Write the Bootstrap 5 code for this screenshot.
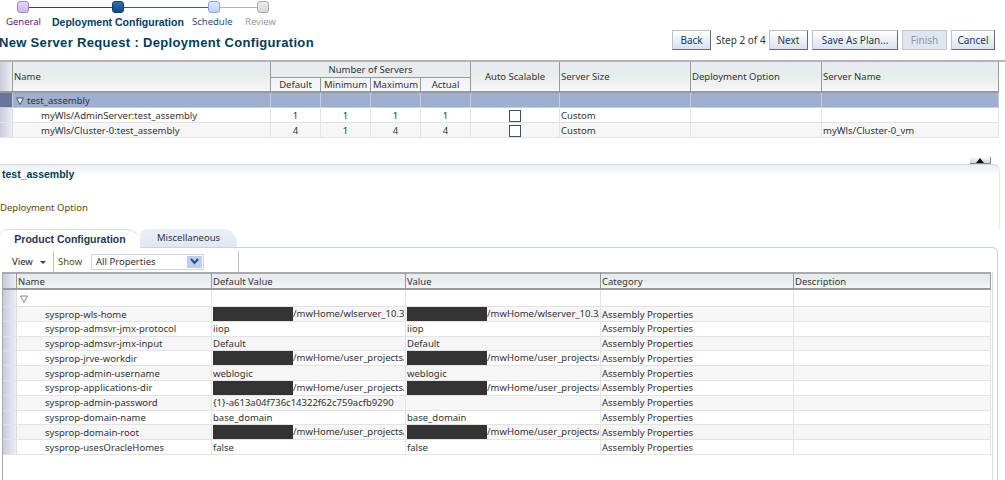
<!DOCTYPE html>
<html lang="en"><head><meta charset="utf-8"><title>New Server Request</title>
<link href="https://cdn.jsdelivr.net/npm/bootstrap@5.3.0/dist/css/bootstrap.min.css" rel="stylesheet">
<style>
html,body{height:480px;overflow:hidden;background:#fff}
body{font-family:"Noto Sans",sans-serif;font-size:9.5px;color:#333;line-height:14px}
.wiz-track{height:13px;margin-left:17px;padding-top:1px}
.wiz-node{width:12px;height:12px;border-radius:3px;border:1px solid #999;flex:none}
.wn-done{background:linear-gradient(#e6d6fb,#cdb4f2);border-color:#9b8ab5}
.wn-cur{background:linear-gradient(#2f73ad,#0d4a80);border-color:#0e3f6c}
.wn-next{background:linear-gradient(#e2ecff,#bcd0f7);border-color:#8aa5d4}
.wn-off{background:linear-gradient(#eee,#d5d5d5);border-color:#aaa}
.wiz-line{height:1px}
.wl-a{width:83px;background:#6d1f7c}.wl-b{width:84px;background:#2a5fa8}.wl-c{width:37px;background:#a9b3c6}
.wiz-labels{height:15px;padding-left:6px;margin-top:2px;white-space:nowrap}
.wl1{color:#6a0d78;width:46px}.wl2{color:#003d6b;font-family:"Liberation Sans",sans-serif;font-size:10.5px;font-weight:700;width:140px}.wl3{color:#1d4e8c;width:53px}.wl4{color:#8f9cab}
.page-head{height:31px;padding-right:10px}
.page-title{font-family:"Liberation Sans",sans-serif;font-size:13px;font-weight:700;color:#003d5b;margin:-2px 0 0 -1px;line-height:18px;letter-spacing:.32px}
.trainbtn{--bs-btn-padding-x:0;--bs-btn-padding-y:0;--bs-btn-border-radius:0;height:20px;line-height:18px;background:linear-gradient(#fff,#d8e2f0);border:1px solid #b9c3d0;border-right-color:#667;border-bottom-color:#667;color:#1c3a5c;font-size:10px}
.trainbtn:disabled{background:#dfe6ef;color:#8a96a4;opacity:1;border-color:#c0c8d2}
.step-txt{width:49px;margin:0 4px 0 5px;white-space:nowrap;font-size:10px}
.w39{width:39px}.w86{width:86px}.w45{width:45px}.w44{width:44px}
.btn-row{gap:4px}
.top-wrap{height:78px;border-top:2px solid #b5b5b5;margin-top:-1px}
.table.ag{table-layout:fixed;border-collapse:separate;border-spacing:0;margin:0;--bs-table-bg:transparent;color:#333}
.table.ag>:not(caption)>*>*{padding:0 1px;border:0;border-right:1px solid #e4e4e4;border-bottom:1px solid #e4e4e4;white-space:nowrap;overflow:hidden;font-weight:400;vertical-align:middle;background-color:#fff;box-shadow:none;line-height:13px}
.table.ag>thead>tr>th{background:linear-gradient(#e8eaf2,#e6eeea 45%,#f5f6fa);border-right:1px solid #999;border-bottom:2px solid #999}
.table.ag>thead>tr>th.mid{text-align:center;border-bottom:1px solid #999;background:linear-gradient(#e8eaf2,#e6eeea)}
.table.ag>thead>tr>th.sub{text-align:center;background:linear-gradient(#f0f2f7,#f7f8fb)}
.table.ag>:not(caption)>tr>.gut{background:linear-gradient(90deg,#c8cbdc,#eceef4);padding:0}
.table.ag>tbody>tr>td.gut{border-right:1px solid #ddd}
.table.ag>tbody>tr.alt>td:not(.gut){background:#f6f6f6}
.table.ag>tbody>tr.picked>td{background:#9fafcf;border-right-color:#c5cfe2;border-bottom-color:#c5cfe2}
.table.ag>tbody>tr.picked>td.gut{background:#67769a}
.t1 thead tr{height:15.5px}
.t1 tbody tr{height:15px}
.table.ag>tbody>tr>td.ctr,.table.ag>thead>tr>th.ctr{text-align:center}
.twist{display:inline-block;vertical-align:-1px;margin-right:3px;margin-left:2px}
.table.ag>tbody>tr>td.ind{padding-left:28px}
.chk.form-check-input{width:12px;height:12px;margin:0;border:1px solid #3d4f6e;border-radius:0;vertical-align:middle;float:none;display:inline-block}
.det-bar{height:13px;margin-top:13px;padding-right:14px}
.split-knob{width:21px;height:7px;background:linear-gradient(#fff,#cdd2dc);border:0;border-right:1px solid #888;border-bottom:1px solid #888;border-radius:0;padding:0}
.det-head{height:65px;border-top:1px solid #cfd6e4;border-right:1px solid #e6eaf0;border-top-right-radius:6px;margin-right:5px;background:linear-gradient(#e9f0f6 0,#fff 11px);padding:1px 0 0 2px}
.det-title{font-family:"Liberation Sans",sans-serif;font-weight:700;color:#003d5b;font-size:10.5px;margin:0;line-height:16px}
.olive{color:#5c4a00}
.dep-opt{margin:18px 0 0 -2px;height:16px;line-height:16px;white-space:nowrap}
.tabstrip{height:18px;--bs-nav-tabs-border-width:0;position:relative;z-index:1}
.tabstrip .nav-link{padding:0;height:18px;line-height:18px;border:0;border-radius:7px 14px 0 0;color:#333;text-align:center}
.tabstrip .tab-a{width:140px;height:19px;font-family:"Liberation Sans",sans-serif;font-size:10.5px;color:#2a3550;font-weight:700;background:#fff;border-top:1px solid #d5dceb}
.tabstrip .tab-b{width:97px;background:linear-gradient(#eaf0f8,#dfe8f3)}
.panel-x{height:233px;border-top:1px solid #c8d3e4;border-right:1px solid #c8d3e4;border-top-right-radius:6px;margin-right:7px;padding:3px 4px 0 2px}
.bar-x{height:21px}
.v-sep{width:1px;height:21px;background:#b8c3d2}
.view-b{width:51px;padding-left:10px;line-height:21px;color:#222}
.caret-x{display:inline-block;border:3px solid transparent;border-top:3px solid #444;border-bottom:0;margin-left:7px;vertical-align:1px}
.show-l{width:33px;margin-left:4px}
.sel-x{width:113px;height:16px;border:1px solid #cfd5de;padding-left:4px;line-height:14px;margin-right:34px}
.sel-arrow{width:15px;height:12px;background:#bccff0;margin:1px}
.t2-wrap{border-left:1px solid #aaa;border-right:1px solid #ddd;height:210px}
.t2 thead tr{height:18px}
.table.ag.t2 thead th{border-top:2px solid #aaa;padding-top:1px}
.t2 tbody tr{height:14.67px}
.t2 tbody tr.lead-row{height:17px}
.table.ag>tbody>tr>td.ind2{padding-left:28px}
.redact{display:inline-block;background:#333;height:15px;flex:none;width:80px}
.rcell>div{display:flex;height:14px;overflow:hidden;align-items:flex-start}
</style></head>
<body>
<div class="d-flex align-items-center wiz-track">
 <div class="wiz-node wn-done"></div><div class="wiz-line wl-a"></div>
 <div class="wiz-node wn-cur"></div><div class="wiz-line wl-b"></div>
 <div class="wiz-node wn-next"></div><div class="wiz-line wl-c"></div>
 <div class="wiz-node wn-off"></div>
</div>
<div class="d-flex wiz-labels">
 <div class="wl1">General</div><div class="wl2">Deployment Configuration</div><div class="wl3">Schedule</div><div class="wl4">Review</div>
</div>
<div class="d-flex justify-content-between align-items-start page-head">
 <h1 class="page-title mt-1">New Server Request : Deployment Configuration</h1>
 <div class="d-flex align-items-center">
  <button class="btn trainbtn w39" type="button">Back</button>
  <span class="step-txt">Step 2 of 4</span>
  <div class="d-flex btn-row">
  <button class="btn trainbtn w39" type="button">Next</button>
  <button class="btn trainbtn w86" type="button">Save As Plan...</button>
  <button class="btn trainbtn w45" type="button" disabled>Finish</button>
  <button class="btn trainbtn w44" type="button">Cancel</button>
  </div>
 </div>
</div>
<div class="top-wrap">
<table class="table ag t1" style="width:999px">
<colgroup><col style="width:13px"><col style="width:258px"><col style="width:50px"><col style="width:50px"><col style="width:50px"><col style="width:50px"><col style="width:89px"><col style="width:131px"><col style="width:131px"><col style="width:177px"></colgroup>
<thead>
<tr><th class="gut" rowspan="2"></th><th rowspan="2">Name</th><th colspan="4" class="mid">Number of Servers</th><th rowspan="2" class="ctr">Auto Scalable</th><th rowspan="2">Server Size</th><th rowspan="2">Deployment Option</th><th rowspan="2">Server Name</th></tr>
<tr><th class="sub">Default</th><th class="sub">Minimum</th><th class="sub">Maximum</th><th class="sub">Actual</th></tr>
</thead>
<tbody>
<tr class="picked"><td class="gut"></td><td><svg class="twist" width="8" height="8" viewBox="0 0 8 8"><path d="M.5 1h7L4 7.5z" fill="#e8ecf4" stroke="#556"/></svg>test_assembly</td><td></td><td></td><td></td><td></td><td></td><td></td><td></td><td></td></tr>
<tr><td class="gut"></td><td class="ind">myWls/AdminServer:test_assembly</td><td class="ctr">1</td><td class="ctr">1</td><td class="ctr">1</td><td class="ctr">1</td><td class="ctr"><input class="form-check-input chk" type="checkbox" aria-label="Auto scalable"></td><td>Custom</td><td></td><td></td></tr>
<tr class="alt"><td class="gut"></td><td class="ind">myWls/Cluster-0:test_assembly</td><td class="ctr">4</td><td class="ctr">1</td><td class="ctr">4</td><td class="ctr">4</td><td class="ctr"><input class="form-check-input chk" type="checkbox" aria-label="Auto scalable"></td><td>Custom</td><td></td><td>myWls/Cluster-0_vm</td></tr>
</tbody></table>
</div>
<div class="d-flex justify-content-end align-items-end det-bar">
 <button class="btn split-knob d-flex align-items-center justify-content-center" type="button" aria-label="Collapse"><svg width="8" height="5" viewBox="0 0 8 5"><path d="M4 0l4 5H0z" fill="#111"/></svg></button>
</div>
<div class="det-head">
 <h2 class="det-title">test_assembly</h2>
 <div class="dep-opt olive">Deployment Option</div>
</div>
<ul class="nav nav-tabs tabstrip">
 <li class="nav-item"><a class="nav-link tab-a" href="#">Product Configuration</a></li>
 <li class="nav-item"><a class="nav-link tab-b" href="#">Miscellaneous</a></li>
</ul>
<div class="panel-x">
 <div class="d-flex align-items-center bar-x">
  <div class="view-b">View<span class="caret-x"></span></div><div class="v-sep"></div>
  <span class="olive show-l">Show</span>
  <div class="d-flex justify-content-between align-items-start sel-x"><span>All Properties</span><span class="sel-arrow d-flex align-items-center justify-content-center"><svg width="9" height="7" viewBox="0 0 9 7"><path d="M1 1l3.5 4L8 1" fill="none" stroke="#2d4a80" stroke-width="2"/></svg></span></div>
  <div class="v-sep"></div>
 </div>
 <div class="t2-wrap">
 <table class="table ag t2" style="width:988px">
 <colgroup><col style="width:14px"><col style="width:195px"><col style="width:194px"><col style="width:195px"><col style="width:193px"><col style="width:197px"></colgroup>
 <thead><tr><th class="gut"></th><th>Name</th><th>Default Value</th><th>Value</th><th>Category</th><th>Description</th></tr></thead>
 <tbody>
 <tr class="lead-row"><td class="gut"></td><td><svg class="twist" width="8" height="8" viewBox="0 0 8 8"><path d="M.5 1h7L4 7.5z" fill="#fff" stroke="#888"/></svg></td><td></td><td></td><td></td><td></td></tr>
 <tr class="alt"><td class="gut"></td><td class="ind2">sysprop-wls-home</td><td class="rcell"><div><span class="redact"></span>/mwHome/wlserver_10.3/</div></td><td class="rcell"><div><span class="redact"></span>/mwHome/wlserver_10.3/</div></td><td>Assembly Properties</td><td></td></tr>
 <tr><td class="gut"></td><td class="ind2">sysprop-admsvr-jmx-protocol</td><td>iiop</td><td>iiop</td><td>Assembly Properties</td><td></td></tr>
 <tr class="alt"><td class="gut"></td><td class="ind2">sysprop-admsvr-jmx-input</td><td>Default</td><td>Default</td><td>Assembly Properties</td><td></td></tr>
 <tr><td class="gut"></td><td class="ind2">sysprop-jrve-workdir</td><td class="rcell"><div><span class="redact"></span>/mwHome/user_projects/</div></td><td class="rcell"><div><span class="redact"></span>/mwHome/user_projects/</div></td><td>Assembly Properties</td><td></td></tr>
 <tr class="alt"><td class="gut"></td><td class="ind2">sysprop-admin-username</td><td>weblogic</td><td>weblogic</td><td>Assembly Properties</td><td></td></tr>
 <tr><td class="gut"></td><td class="ind2">sysprop-applications-dir</td><td class="rcell"><div><span class="redact"></span>/mwHome/user_projects/</div></td><td class="rcell"><div><span class="redact"></span>/mwHome/user_projects/</div></td><td>Assembly Properties</td><td></td></tr>
 <tr class="alt"><td class="gut"></td><td class="ind2">sysprop-admin-password</td><td>{1}-a613a04f736c14322f62c759acfb9290</td><td></td><td>Assembly Properties</td><td></td></tr>
 <tr><td class="gut"></td><td class="ind2">sysprop-domain-name</td><td>base_domain</td><td>base_domain</td><td>Assembly Properties</td><td></td></tr>
 <tr class="alt"><td class="gut"></td><td class="ind2">sysprop-domain-root</td><td class="rcell"><div><span class="redact"></span>/mwHome/user_projects/</div></td><td class="rcell"><div><span class="redact"></span>/mwHome/user_projects/</div></td><td>Assembly Properties</td><td></td></tr>
 <tr><td class="gut"></td><td class="ind2">sysprop-usesOracleHomes</td><td>false</td><td>false</td><td>Assembly Properties</td><td></td></tr>
 </tbody></table>
 </div>
</div>
<script src="https://cdn.jsdelivr.net/npm/bootstrap@5.3.0/dist/js/bootstrap.bundle.min.js"></script>
</body></html>
